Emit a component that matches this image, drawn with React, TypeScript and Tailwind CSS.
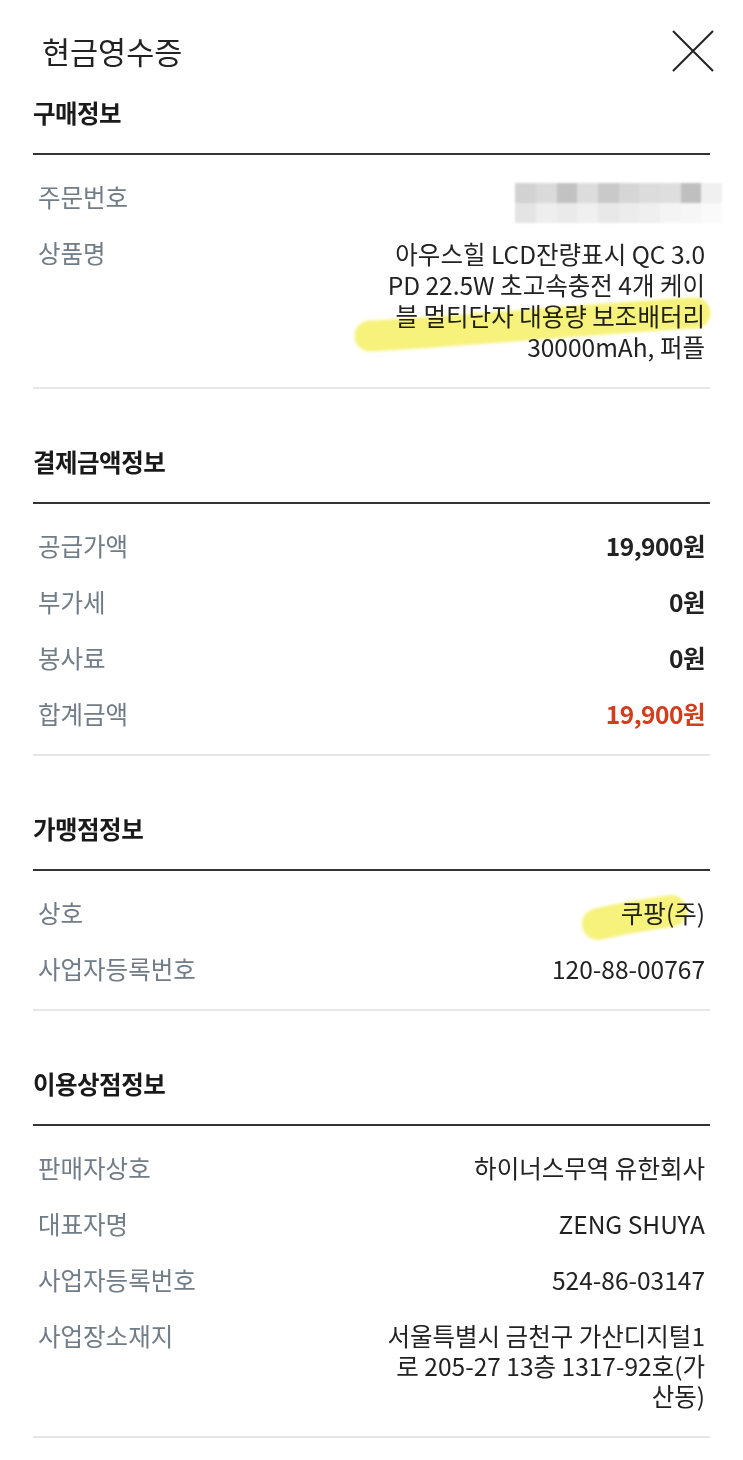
import React from "react"

type Row = { label: string; value: React.ReactNode; strong?: boolean; red?: boolean }

const blurTop = ["#d2d2d2", "#dadada", "#c2c2c2", "#dcdcdc", "#c9c9c9", "#d6d6d6", "#dcdcdc", "#dedede", "#bfbfbf", "#f0f0f0"]
const blurBottom = ["#e4e4e4", "#eeeeee", "#eaeaea", "#f0f0f0", "#e8e8e8", "#ececec", "#efefef", "#f4f4f4", "#f6f6f6", "#fafafa"]

function Mosaic() {
  return (
    <div className="flex flex-col blur-[1px] mr-[-17px] mt-[1px] mb-[-11px]">
      <div className="flex">
        {blurTop.map((c, i) => (
          <div key={i} className="w-[20.7px] h-[20px]" style={{ background: c }} />
        ))}
      </div>
      <div className="flex">
        {blurBottom.map((c, i) => (
          <div key={i} className="w-[20.7px] h-[20px]" style={{ background: c }} />
        ))}
      </div>
    </div>
  )
}

function Section({ title, rows }: { title: string; rows: Row[] }) {
  return (
    <section>
      <h2 className="pt-[58px] pb-[25px] text-[24.5px] leading-[30px] font-bold text-[#1a1a1a] tracking-[-0.5px]">{title}</h2>
      <div className="h-[2px] bg-[#333333]" />
      <div className="pt-[14px] pb-[12px]">
        {rows.map((r) => (
          <div key={r.label} className="flex justify-between items-start px-[5px] py-[13px]">
            <span className="text-[24.5px] leading-[30px] text-[#707c86] shrink-0">{r.label}</span>
            <span
              className={
                "text-right text-[24.5px] leading-[30px] " +
                (r.strong ? "font-bold tracking-[-0.5px] " : "") +
                (r.red ? "text-[#d23d1c]" : "text-[#222222]")
              }
            >
              {r.value}
            </span>
          </div>
        ))}
      </div>
      <div className="h-[2px] bg-[#e6e6e6]" />
    </section>
  )
}

export default function App() {
  return (
    <div
      className="relative w-[743px] min-h-[1460px] bg-white px-[33px]"
      style={{ fontFamily: '"Noto Sans CJK KR", "Noto Sans", sans-serif' }}
    >
      <header className="flex items-center justify-between pt-[30px] pl-[9px]">
        <h1 className="text-[30.5px] leading-[42px] text-[#222222] font-normal">현금영수증</h1>
        <svg width="42" height="42" viewBox="0 0 42 42" className="mr-[-4px]">
          <path d="M1 1 L41 41 M41 1 L1 41" stroke="#222" strokeWidth="2" fill="none" />
        </svg>
      </header>

      <section>
        <h2 className="pt-[26px] pb-[25px] text-[24.5px] leading-[30px] font-bold text-[#1a1a1a] tracking-[-0.5px]">구매정보</h2>
        <div className="h-[2px] bg-[#333333]" />
        <div className="pt-[14px] pb-[12px]">
          <div className="flex justify-between items-start px-[5px] py-[13px]">
            <span className="text-[24.5px] leading-[30px] text-[#707c86]">주문번호</span>
            <Mosaic />
          </div>
          <div className="flex justify-between items-start px-[5px] py-[13px]">
            <span className="text-[24.5px] leading-[30px] text-[#707c86] shrink-0">상품명</span>
            <span className="text-right text-[24.5px] leading-[31px] text-[#222222]">
              아우스힐 LCD잔량표시 QC 3.0
              <br />
              PD 22.5W 초고속충전 4개 케이
              <br />
              블 멀티단자 대용량 보조배터리
              <br />
              30000mAh, 퍼플
            </span>
          </div>
        </div>
        <div className="h-[2px] bg-[#e6e6e6]" />
      </section>

      <Section
        title="결제금액정보"
        rows={[
          { label: "공급가액", value: "19,900원", strong: true },
          { label: "부가세", value: "0원", strong: true },
          { label: "봉사료", value: "0원", strong: true },
          { label: "합계금액", value: "19,900원", strong: true, red: true },
        ]}
      />

      <Section
        title="가맹점정보"
        rows={[
          { label: "상호", value: "쿠팡(주)" },
          { label: "사업자등록번호", value: "120-88-00767" },
        ]}
      />

      <Section
        title="이용상점정보"
        rows={[
          { label: "판매자상호", value: "하이너스무역 유한회사" },
          { label: "대표자명", value: "ZENG SHUYA" },
          { label: "사업자등록번호", value: "524-86-03147" },
          {
            label: "사업장소재지",
            value: (
              <>
                서울특별시 금천구 가산디지털1
                <br />
                로 205-27 13층 1317-92호(가
                <br />
                산동)
              </>
            ),
          },
        ]}
      />

      {/* marker highlights drawn over the text */}
      <svg className="absolute left-0 top-0 pointer-events-none mix-blend-multiply" width="743" height="1460">
        <defs>
          <filter id="soft" x="-10%" y="-50%" width="120%" height="200%">
            <feGaussianBlur stdDeviation="1.5" />
          </filter>
        </defs>
        <g filter="url(#soft)" stroke="#f6f27c" strokeLinecap="round" fill="none">
          <path d="M370 336 C 480 330, 600 318, 695 313" strokeWidth="31" />
          <path d="M598 924 C 625 918, 650 914, 671 911" strokeWidth="32" />
        </g>
      </svg>
    </div>
  )
}
